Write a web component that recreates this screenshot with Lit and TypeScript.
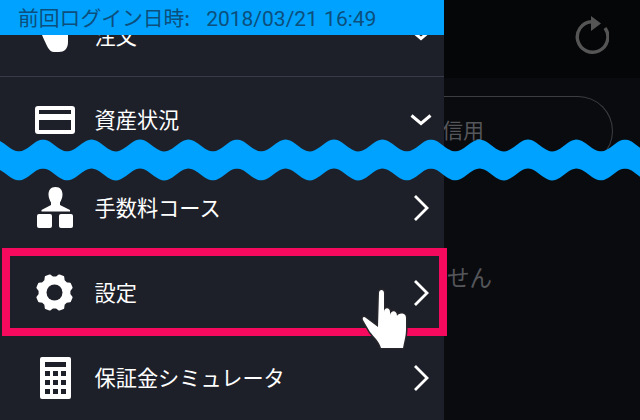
import { LitElement, html, css, svg } from 'lit';
import { customElement } from 'lit/decorators.js';

const chevron = svg`<path d="M2 2 L14 14 L2 26" fill="none" stroke="#fff" stroke-width="2.8"/>`;

const gearPath = () => {
  // 8 teeth, turned so that two of them sit at the top
  const pts: string[] = [];
  for (let i = 0; i < 8; i++) {
    const a = (i * Math.PI) / 4 - Math.PI / 2 + Math.PI / 8;
    [[-0.27, 15], [-0.12, 17.8], [0.12, 17.8], [0.27, 15]].forEach(([d, r]) => {
      pts.push(`${(19.5 + r * Math.cos(a + d)).toFixed(1)} ${(19.5 + r * Math.sin(a + d)).toFixed(1)}`);
    });
  }
  return `M${pts.join(' L')} Z`;
};

const wavePath = () => {
  const period = 48.5;
  const top: string[] = [];
  const bottom: string[] = [];
  for (let x = 0; x <= 640; x += 2) {
    const y = 5.9 * Math.cos(((x - 43) / period) * 2 * Math.PI);
    top.push(`${x} ${(11.5 - y).toFixed(2)}`);
    bottom.unshift(`${x} ${(40.5 - y).toFixed(2)}`);
  }
  return `M${top.join(' L')} L${bottom.join(' L')} Z`;
};

const icons = {
  hand: svg`<svg width="26" height="34" viewBox="0 0 26 34"><path d="M0 0 H26 V24 C26 31 22 34 17 34 H12 C7 34 5 28 0 17 Z" fill="#fff"/></svg>`,
  card: svg`<svg width="40" height="28" viewBox="0 0 40 28"><path fill="#fff" fill-rule="evenodd" d="M3 0 H37 A3 3 0 0 1 40 3 V25 A3 3 0 0 1 37 28 H3 A3 3 0 0 1 0 25 V3 A3 3 0 0 1 3 0 Z M4 4 V8 H36 V4 Z M4 14 V24 H36 V14 Z"/></svg>`,
  person: svg`<svg width="36" height="41" viewBox="0 0 36 41"><path fill="#fff" d="M18.5 0 C23.5 0 25.5 3.5 25.5 7.5 C25.5 11 24 13.5 23 15.5 V18 L33 23 V24.5 H4.5 V23 L14 18 V15.5 C13 13.5 11.5 11 11.5 7.5 C11.5 3.5 13.5 0 18.5 0 Z"/><rect x="0" y="27" width="15" height="14" rx="2" fill="#fff"/><rect x="22" y="27" width="14" height="14" rx="2" fill="#fff"/></svg>`,
  gear: svg`<svg width="40" height="40" viewBox="0 0 40 40"><path fill="#fff" stroke="#fff" stroke-width="2" stroke-linejoin="round" d="${gearPath()}"/><circle cx="19.5" cy="19.5" r="8" fill="#1e2029"/></svg>`,
  calc: svg`<svg width="31" height="42" viewBox="0 0 31 42"><path fill="#fff" fill-rule="evenodd" d="M2 0 H29 A2 2 0 0 1 31 2 V40 A2 2 0 0 1 29 42 H2 A2 2 0 0 1 0 40 V2 A2 2 0 0 1 2 0 Z M5 5 V10 H26 V5 Z M5 14 V19 H10 V14 Z M13 14 V19 H18 V14 Z M21 14 V19 H26 V14 Z M5 23 V28 H10 V23 Z M13 23 V28 H18 V23 Z M21 23 V28 H26 V23 Z M5 32 V37 H10 V32 Z M13 32 V37 H18 V32 Z M21 32 V37 H26 V32 Z"/></svg>`,
};

@customElement('app-root')
export class AppRoot extends LitElement {
  static styles = css`
    :host {
      display: block;
      width: 640px;
      height: 420px;
      position: relative;
      overflow: hidden;
      background: #0a0b0f;
      font-family: "Noto Sans CJK JP", "Roboto", sans-serif;
    }
    .page {
      display: grid;
      grid-template-columns: 444px 196px;
      height: 420px;
    }
    .menu {
      background: #1e2029;
      display: flex;
      flex-direction: column;
      overflow: hidden;
    }
    .login {
      height: 35px;
      flex: none;
      box-sizing: border-box;
      padding-left: 18px;
      background: #00a2ff;
      color: #0c4f7c;
      font-size: 20.8px;
      line-height: 35px;
      white-space: nowrap;
      position: relative;
      z-index: 1;
    }
    .login b {
      font-family: "Roboto", sans-serif;
      font-weight: 400;
      font-size: 21px;
      margin-left: 16px;
      word-spacing: 1px;
    }
    .clip {
      height: 41px;
      flex: none;
      overflow: hidden;
      display: flex;
      align-items: flex-end;
      border-bottom: 1.5px solid #3a3b48;
    }
    .row {
      flex: none;
      width: 100%;
      height: 85px;
      box-sizing: border-box;
      display: flex;
      align-items: center;
      color: #fff;
      font-size: 21.2px;
    }
    .clip .row { height: 82px; }
    .row.assets { height: 88px; padding-bottom: 3px; }
    .slot {
      width: 95px;
      flex: none;
      display: flex;
      justify-content: center;
      box-sizing: border-box;
      padding-left: 15px;
    }
    .slot svg { display: block; }
    .label { flex: 1; padding-bottom: 2px; margin-left: -0.5px; }
    .arrow {
      width: 16px;
      margin-right: 15px;
      display: flex;
    }
    .down {
      width: 22px;
      margin-right: 12px;
      display: flex;
    }
    .side { display: flex; flex-direction: column; overflow: hidden; }
    .head {
      height: 78px;
      flex: none;
      background: #050608;
      display: flex;
      align-items: center;
      justify-content: flex-end;
      padding: 0 31px 8px 0;
      box-sizing: border-box;
    }
    .pill {
      height: 70px;
      width: 169px;
      margin-top: 18px;
      box-sizing: border-box;
      border: 1px solid #3d3e42;
      border-left: none;
      border-radius: 0 35px 35px 0;
      color: #55565a;
      font-size: 21px;
      display: flex;
      align-items: center;
      padding-bottom: 5px;
    }
    .pill span { margin-left: -2px; }
    .none {
      margin-top: 95px;
      padding-left: 3px;
      color: #55565a;
      font-size: 22.5px;
      line-height: 30px;
    }
    .wave {
      position: absolute;
      left: 0;
      top: 133.5px;
    }
    .focus {
      position: absolute;
      left: 2px;
      top: 248px;
      width: 445px;
      height: 88px;
      box-sizing: border-box;
      border: 8px solid #f50a5e;
    }
    .pointer {
      position: absolute;
      left: 355px;
      top: 280px;
    }
  `;

  private _row(icon: unknown, label: string, cls = '') {
    return html`
      <div class="row ${cls}">
        <div class="slot">${icon}</div>
        <div class="label">${label}</div>
        ${cls === 'assets' || cls === 'order'
          ? html`<div class="down"><svg width="22" height="12" viewBox="0 0 22 12"><path d="M1.5 1.5 L11 9.5 L20.5 1.5" fill="none" stroke="#fff" stroke-width="3"/></svg></div>`
          : html`<div class="arrow"><svg width="16" height="28" viewBox="0 0 16 28">${chevron}</svg></div>`}
      </div>
    `;
  }

  render() {
    return html`
      <div class="page">
        <div class="menu">
          <div class="login">前回ログイン日時:<b>2018/03/21 16:49</b></div>
          <div class="clip">${this._row(icons.hand, '注文', 'order')}</div>
          ${this._row(icons.card, '資産状況', 'assets')}
          ${this._row(icons.person, '手数料コース')}
          ${this._row(icons.gear, '設定')}
          ${this._row(icons.calc, '保証金シミュレータ')}
        </div>
        <div class="side">
          <div class="head">
            <svg width="36" height="38" viewBox="0 0 36 38">
              <path d="M18 5.7 A15.3 15.3 0 1 0 32 12" fill="none" stroke="#555" stroke-width="3.4"/>
              <path d="M18 0 L28 7.5 L18 15 Z" fill="#555"/>
            </svg>
          </div>
          <div class="pill"><span>信用</span></div>
          <div class="none">せん</div>
        </div>
      </div>
      <svg class="wave" width="640" height="54" viewBox="0 0 640 54"><path d="${wavePath()}" fill="#00a2ff"/></svg>
      <div class="focus"></div>
      <svg class="pointer" width="60" height="75" viewBox="0 0 60 75">
        <path d="M24 13 C24 9 29 9 29 13 V32 C29 27 35 27 35 32 V35 C36 30 42 30 42 36 C43 33 51 32 51 38 V50 C51 56 49 62 48 68 H26 C24 61 19 57 15 52 L8 40 C7 37 9 36 11 38 L23 47 Z" fill="#fff" stroke="#26262c" stroke-width="3" stroke-linejoin="round" paint-order="stroke"/>
      </svg>
    `;
  }
}
